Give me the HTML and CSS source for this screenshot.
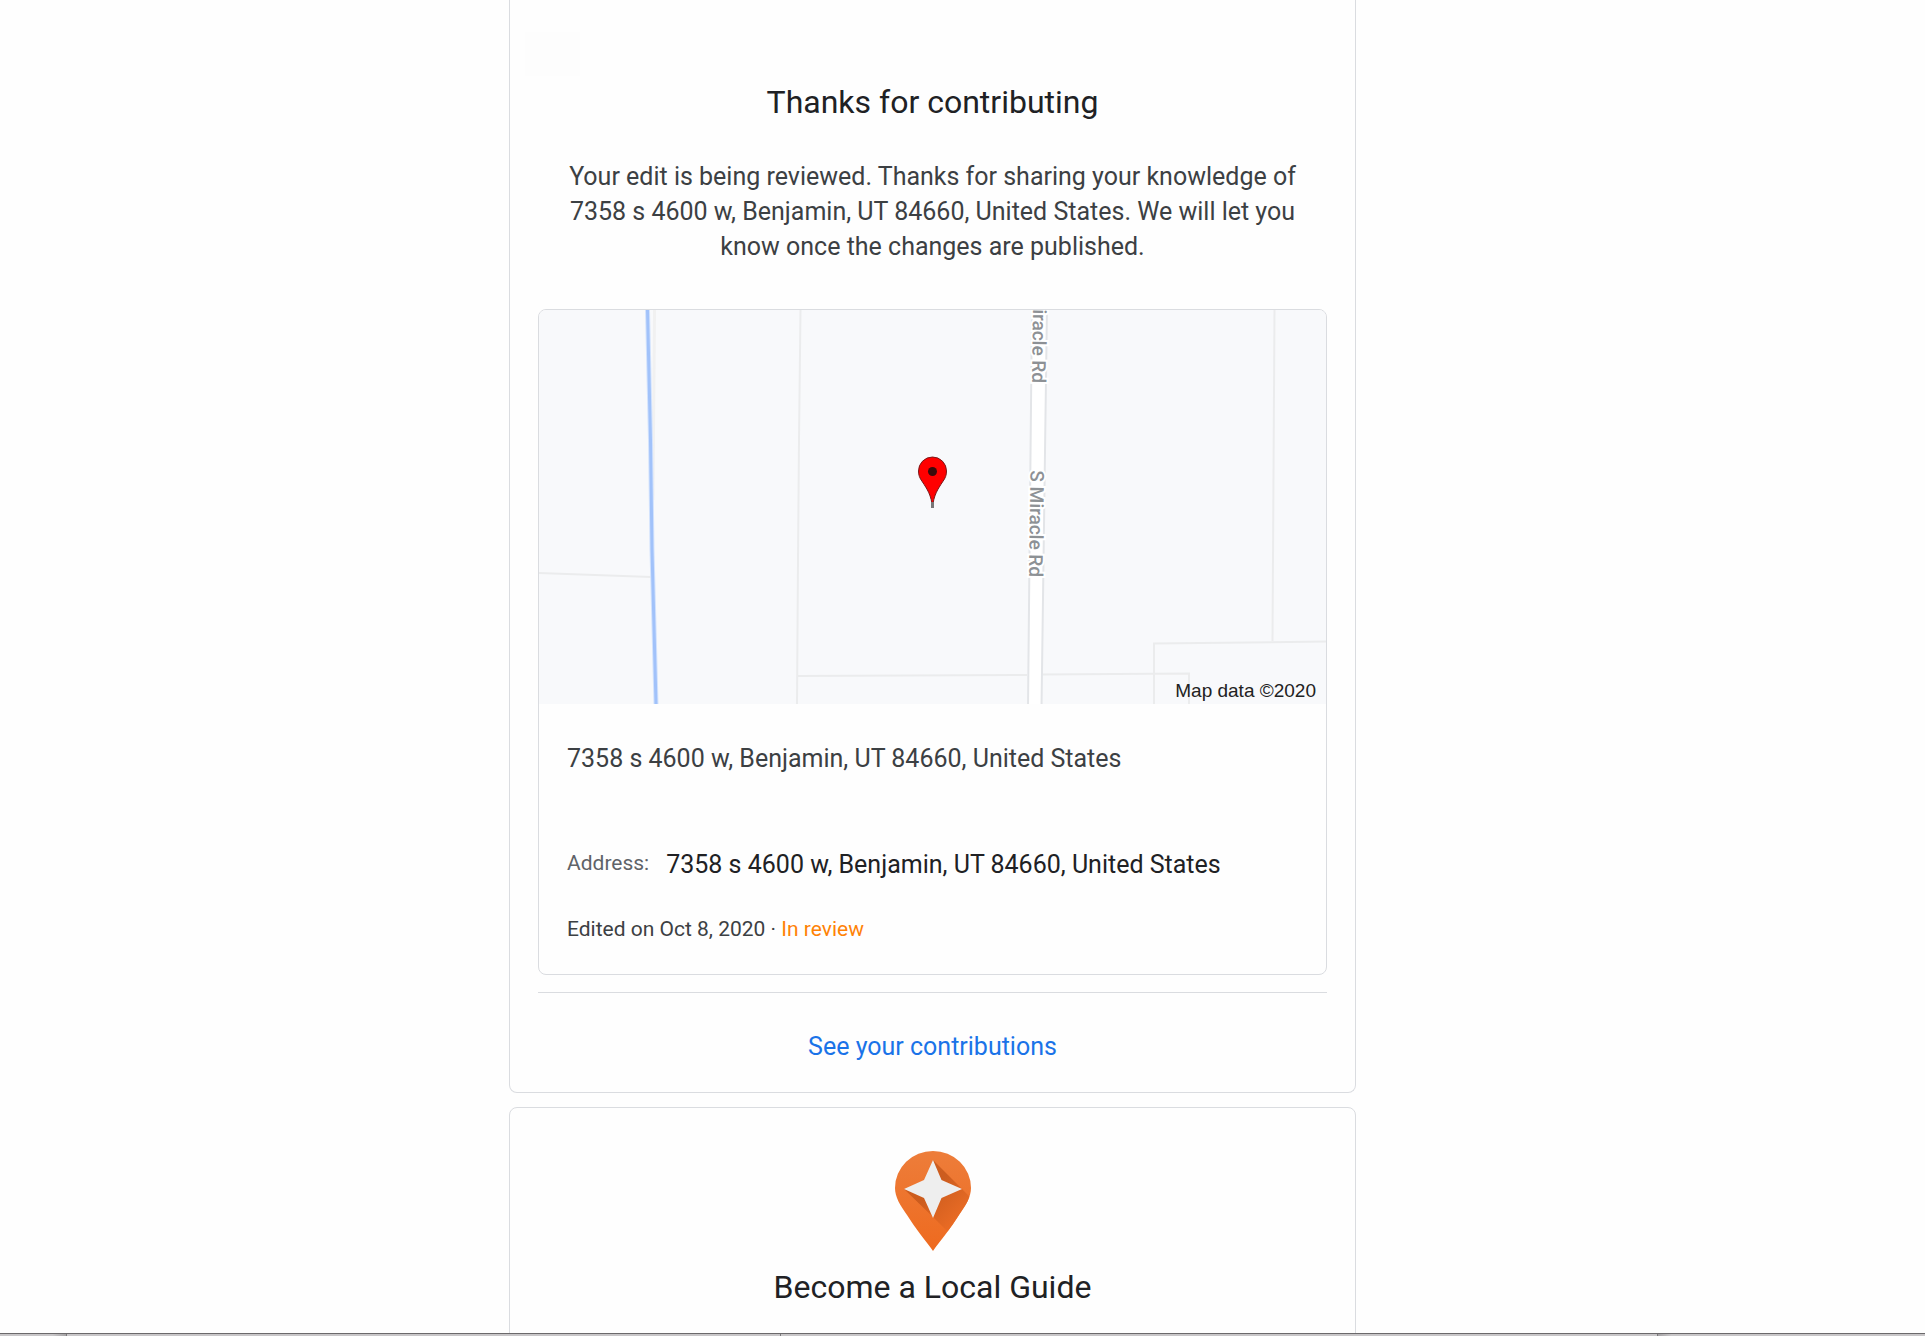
FILE: index.html
```html
<!DOCTYPE html>
<html lang="en">
<head>
<meta charset="utf-8">
<meta name="viewport" content="width=device-width, initial-scale=1">
<title>Thanks for contributing</title>
<link rel="stylesheet" href="styles.css">
</head>
<body>
<main class="page">
  <section class="card card-thanks">
    <div class="ghost"></div>
    <h1 class="title">Thanks for contributing</h1>
    <p class="message">Your edit is being reviewed. Thanks for sharing your knowledge of 7358 s 4600 w, Benjamin, UT 84660, United States. We will let you know once the changes are published.</p>

    <article class="place">
      <svg class="map" viewBox="0 0 787 394" preserveAspectRatio="xMidYMid slice" role="img" aria-label="Map of the edited place">
        <rect width="787" height="394" fill="#f8f9fb"/>
        <g fill="none" stroke="#ebeced" stroke-width="2">
          <path d="M115.500 0L114 190" stroke="#f1f1f1" stroke-width="3"/>
          <path d="M261.500 0L260 130L259 250L258 394"/>
          <path d="M0 263L112 267"/>
          <path d="M258 366L488 365M502 364.500L650 363.500V394"/>
          <path d="M615 394V333.500L787 331.500"/>
          <path d="M735.500 0L733.500 331"/>
        </g>
        <path d="M108.500 0L111.500 130L113 240L117 394" fill="none" stroke="#d3e3fd" stroke-width="5"/>
        <path d="M108.500 0L111.500 130L113 240L117 394" fill="none" stroke="#a1c2fa" stroke-width="3"/>
        <path d="M493 -4H508L502.500 398H489Z" fill="#fff" stroke="#e3e5e8" stroke-width="2"/>
        <g class="road-name">
          <text transform="translate(493 73) rotate(90.800)">S Miracle Rd</text>
          <text transform="translate(490 267) rotate(90.800)">S Miracle Rd</text>
        </g>
        <path d="M393.500 198C392.500 185 388 179 383.500 172C380.500 168 379.500 165 379.500 161A14 14 0 0 1 407.500 161C407.500 165 406.500 168 403.500 172C399 179 394.500 185 393.500 198Z" fill="#f00" stroke="#7b1a1a" stroke-width="1"/>
        <path d="M393.500 192V198" stroke="#777" stroke-width="3"/>
        <circle cx="393.500" cy="161.500" r="4.500" fill="#3a0b0b"/>
        <text class="credit" x="777" y="387">Map data ©2020</text>
      </svg>
      <div class="details">
        <p class="name">7358 s 4600 w, Benjamin, UT 84660, United States</p>
        <dl class="field">
          <dt>Address:</dt>
          <dd>7358 s 4600 w, Benjamin, UT 84660, United States</dd>
        </dl>
        <p class="status">Edited on Oct 8, 2020 · <span class="review">In review</span></p>
      </div>
    </article>

    <hr class="rule">
    <a class="link" href="#contributions">See your contributions</a>
  </section>

  <section class="card card-guide">
    <svg class="badge" viewBox="0 0 76 100" aria-hidden="true">
      <defs>
        <linearGradient id="pin" x1="0" y1="0" x2="0" y2="1">
          <stop offset="0" stop-color="#ed7d3a"/>
          <stop offset="1" stop-color="#ee6a1f"/>
        </linearGradient>
        <linearGradient id="shade" gradientUnits="userSpaceOnUse" x1="38" y1="38" x2="66" y2="66">
          <stop offset="0" stop-color="#c4561a"/>
          <stop offset="1" stop-color="#e86a24"/>
        </linearGradient>
        <clipPath id="pin-shape"><path d="M38 100C31 90 20 77 12 64C5 54 0 46 0 37A38 37 0 0 1 76 37C76 46 71 54 64 64C56 77 45 90 38 100Z"/></clipPath>
      </defs>
      <g clip-path="url(#pin-shape)">
        <rect width="76" height="100" fill="url(#pin)"/>
        <path d="M38 9L67 38L84 55L56 84L38 66L9 38L38 38Z" fill="url(#shade)" opacity=".8"/>
        <path d="M38 9L46.500 29L67 38L46.500 47L38 67L29 47L9 38L29 29Z" fill="#eee"/>
      </g>
    </svg>
    <h2 class="title">Become a Local Guide</h2>
  </section>
</main>
<footer class="edge"><span class="edge-start"></span><span class="edge-mid"></span><span class="edge-wide"></span><span class="edge-rest"></span></footer>
</body>
</html>
```

FILE: styles.css
```css
* { box-sizing: border-box; }

body {
  margin: 0;
  height: 100vh;
  display: flex;
  flex-direction: column;
  overflow: hidden;
  background: #fefefe;
  color: #202124;
  font-family: Roboto, "Liberation Sans", sans-serif;
}

h1, h2, p, dl, dd { margin: 0; }

.page {
  flex: 1;
  min-height: 0;
  overflow: hidden;
  display: flex;
  flex-direction: column;
  align-items: center;
  gap: 14px;
  padding-right: 60px;
}

.card {
  flex: none;
  width: 100%;
  max-width: 847px;
  display: flex;
  flex-direction: column;
  border: 1px solid #dadce0;
  border-radius: 8px;
}

.card-thanks {
  border-top: 0;
  border-radius: 0 0 8px 8px;
  padding: 32px 28px 28px;
}

.card-guide {
  align-items: center;
  padding: 43px 28px 60px;
}

.ghost {
  width: 55px;
  height: 44px;
  margin-left: -13px;
  background: #fdfdfd;
}

.title {
  font-size: 32px;
  line-height: 40px;
  font-weight: 400;
  text-align: center;
}

.card-thanks .title { margin-top: 6px; }
.card-guide .title { margin-top: 16px; }

.message {
  margin: 37px 28px 45px;
  font-size: 25px;
  line-height: 35px;
  text-align: center;
  color: #3c4043;
}

.place {
  border: 1px solid #dadce0;
  border-radius: 8px;
  overflow: hidden;
}

.map {
  display: block;
  width: 100%;
  height: auto;
}

.road-name {
  font-size: 19px;
  font-weight: 500;
  text-anchor: end;
  fill: #8d9195;
  stroke: #fff;
  stroke-width: 4px;
  paint-order: stroke;
}

.credit {
  font-family: "Liberation Sans", Arial, sans-serif;
  font-size: 19px;
  text-anchor: end;
  fill: #222;
}

.details { padding: 37px 28px 31px; }

.name {
  font-size: 25px;
  line-height: 35px;
  color: #3c4043;
}

.field {
  display: flex;
  gap: 17px;
  margin: 71px 0 33px;
}

.field dt {
  font-size: 21px;
  line-height: 32px;
  color: #5f6368;
}

.field dd {
  font-size: 25px;
  line-height: 35px;
}

.status {
  font-size: 21px;
  line-height: 28px;
  color: #3c4043;
}

.review { color: #ff8206; }

.rule {
  width: 100%;
  height: 1px;
  margin: 17px 0 36px;
  border: 0;
  background: #dadce0;
}

.link {
  align-self: center;
  font-size: 25px;
  line-height: 35px;
  color: #1a73e8;
  text-decoration: none;
}

.badge {
  width: 76px;
  height: 100px;
}

.edge {
  flex: none;
  display: flex;
  height: 3px;
  border-top: 1px solid #6b696b;
  background: #c8c6c8;
}

.edge span { border-right: 1px solid #7c7a7c; }
.edge-start { width: 67px; background: linear-gradient(90deg, #c8c6c8 80%, #a5a3a5); }
.edge-mid { flex: 714; }
.edge-wide { flex: 877; }
.edge .edge-rest { flex: 267; border-right: 0; background: linear-gradient(90deg, #a5a3a5, #c8c6c8 5%); }
```
